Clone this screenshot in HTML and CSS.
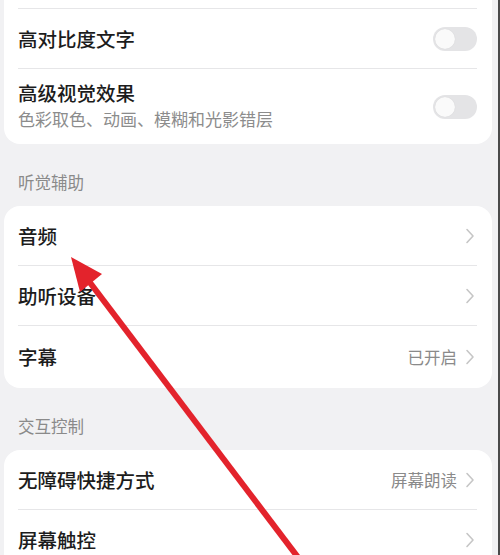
FILE: index.html
```html
<!DOCTYPE html>
<html lang="zh">
<head>
<meta charset="utf-8">
<link rel="stylesheet" href="styles.css">
</head>
<body>
<div class="page">
  <div class="content">
    <div class="card card-first">
      <div class="row row-partial"></div>
      <div class="divider"></div>
      <div class="row">
        <div class="title">高对比度文字</div>
        <span class="toggle"><span class="knob"></span></span>
      </div>
      <div class="divider"></div>
      <div class="row row-tall">
        <div class="texts">
          <div class="title">高级视觉效果</div>
          <div class="sub">色彩取色、动画、模糊和光影错层</div>
        </div>
        <span class="toggle toggle-low"><span class="knob"></span></span>
      </div>
    </div>

    <div class="label">听觉辅助</div>
    <div class="card">
      <div class="row">
        <div class="title">音频</div>
        <div class="right"><svg class="chev" viewBox="0 0 10 16"><path d="M2 1.5 L8 8 L2 14.5"/></svg></div>
      </div>
      <div class="divider"></div>
      <div class="row">
        <div class="title">助听设备</div>
        <div class="right"><svg class="chev" viewBox="0 0 10 16"><path d="M2 1.5 L8 8 L2 14.5"/></svg></div>
      </div>
      <div class="divider"></div>
      <div class="row row-last">
        <div class="title">字幕</div>
        <div class="right"><span class="value">已开启</span><svg class="chev" viewBox="0 0 10 16"><path d="M2 1.5 L8 8 L2 14.5"/></svg></div>
      </div>
    </div>

    <div class="label">交互控制</div>
    <div class="card">
      <div class="row">
        <div class="title">无障碍快捷方式</div>
        <div class="right"><span class="value">屏幕朗读</span><svg class="chev" viewBox="0 0 10 16"><path d="M2 1.5 L8 8 L2 14.5"/></svg></div>
      </div>
      <div class="divider"></div>
      <div class="row">
        <div class="title">屏幕触控</div>
        <div class="right"><svg class="chev" viewBox="0 0 10 16"><path d="M2 1.5 L8 8 L2 14.5"/></svg></div>
      </div>
    </div>
  </div>
  <div class="edge"></div>

  <svg class="arrow" viewBox="0 0 500 555" width="500" height="555">
    <line x1="300" y1="560" x2="88" y2="280" />
    <polygon points="71,257 102,274 80,292" />
  </svg>
</div>
</body>
</html>
```
FILE: styles.css
```css
html, body {
  margin: 0;
  padding: 0;
}
body {
  width: 500px;
  height: 555px;
  overflow: hidden;
  background: #f1f1f3;
  font-family: "Noto Sans CJK SC", "Noto Sans", sans-serif;
}
.page {
  position: relative;
  display: flex;
  width: 500px;
  height: 555px;
  overflow: hidden;
}
.content {
  flex: 1;
  padding: 0 4px 0 4px;
}
.edge {
  width: 2px;
  background: #4a4a4a;
}
.card {
  background: #ffffff;
  border-radius: 16px;
  margin-right: 2px;
}
.card-first {
  margin-top: -50px;
}
.row {
  height: 59px;
  display: flex;
  align-items: center;
  justify-content: space-between;
  padding: 0 17px 0 14px;
}
.row-partial {
  height: 58px;
}
.row-tall {
  height: 75px;
  box-sizing: border-box;
  padding-bottom: 4px;
}
.row-last {
  height: 62px;
}
.divider {
  height: 1px;
  background: #e6e6e8;
  margin: 0 15px 0 14px;
}
.texts {
  display: flex;
  flex-direction: column;
}
.title {
  font-size: 19.5px;
  line-height: 28px;
  color: #1c1c1c;
  font-weight: 500;
}
.sub {
  font-size: 17px;
  line-height: 24px;
  color: #8c8c8c;
}
.label {
  font-size: 16.5px;
  line-height: 20px;
  color: #8a8a8a;
  padding: 28px 0 14px 14px;
}
.right {
  display: flex;
  align-items: center;
  gap: 8px;
}
.value {
  font-size: 16.5px;
  color: #8a8a8a;
}
.chev {
  width: 10px;
  height: 16px;
  fill: none;
  stroke: #c6c6c6;
  stroke-width: 1.6;
  stroke-linecap: round;
  stroke-linejoin: round;
}
.toggle {
  width: 44px;
  height: 24px;
  border-radius: 12px;
  background: #e4e4e6;
  display: flex;
  align-items: center;
  padding: 0 2px;
  box-sizing: border-box;
  margin-right: -2px;
}
.toggle-low {
  margin-top: 4px;
}
.knob {
  width: 20px;
  height: 20px;
  border-radius: 50%;
  background: #fafafa;
  box-shadow: 0 0 1px rgba(0,0,0,0.12);
}
.arrow {
  position: absolute;
  left: 0;
  top: 0;
  pointer-events: none;
}
.arrow line {
  stroke: #e3232c;
  stroke-width: 6;
}
.arrow polygon {
  fill: #e3232c;
}
```
